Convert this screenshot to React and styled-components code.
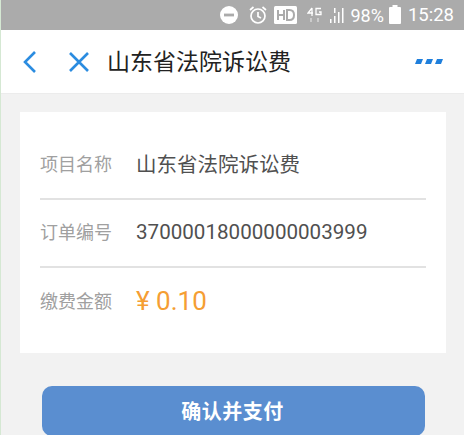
import styled, { createGlobalStyle } from "styled-components";

const CJK = `"Noto Sans CJK SC", "Roboto", sans-serif`;

const GlobalStyle = createGlobalStyle`
  html, body {
    margin: 0;
    padding: 0;
    background: #f2f2f2;
  }
`;

const Page = styled.div`
  width: 464px;
  height: 435px;
  overflow: hidden;
  box-sizing: border-box;
  border-left: 1px solid #d5e8d3;
  background: #f2f2f2;
  font-family: ${CJK};
`;

const StatusBar = styled.div`
  height: 30px;
  margin-left: -1px;
  padding-right: 10px;
  display: flex;
  align-items: center;
  justify-content: flex-end;
  background: #ababab;
  color: #fff;
`;

const StatusIcon = styled.svg`
  display: block;
  margin-right: ${(p) => p.$gap}px;
`;

const Battery = styled.span`
  font-family: Roboto, sans-serif;
  font-size: 18px;
  margin-right: 5px;
`;

const Clock = styled.span`
  font-family: Roboto, sans-serif;
  font-size: 18.5px;
  margin-left: 7px;
`;

const NavBar = styled.div`
  height: 63px;
  padding: 0 21px;
  display: flex;
  align-items: center;
  background: #fff;
  border-bottom: 1px solid #ececec;
`;

const NavIcon = styled.svg`
  display: block;
  margin-right: ${(p) => p.$gap}px;
`;

const Title = styled.div`
  flex: 1;
  font-size: 23px;
  color: #222;
  margin-top: -3px;
`;

const Card = styled.div`
  margin: 18px 18px 0 19px;
  padding: 20px 20px 17px;
  background: #fff;
`;

const Row = styled.div`
  height: 68px;
  display: flex;
  align-items: center;
  border-bottom: ${(p) => (p.$last ? "none" : "2px solid #e2e2e2")};
  box-sizing: border-box;
`;

const Label = styled.div`
  width: 96px;
  font-size: 18px;
  color: #a0a0a0;
  margin-top: -4px;
`;

const Value = styled.div`
  font-size: ${(p) => (p.$amount ? 26 : p.$digits ? 20.6 : 20.5)}px;
  color: ${(p) => (p.$amount ? "#f59e33" : "#505050")};
  font-family: ${(p) => (p.$cjk ? CJK : `Roboto, sans-serif`)};
  margin-top: ${(p) => (p.$cjk ? -4 : -2)}px;
`;

const PayButton = styled.button`
  display: block;
  width: 383px;
  height: 50px;
  margin: 33px 0 0 41px;
  padding: 0 2px 2px 0;
  border: none;
  border-radius: 10px;
  background: #5a8ed0;
  color: #fff;
  font-family: ${CJK};
  font-size: 20px;
  font-weight: 700;
  letter-spacing: 0.5px;
`;

export default function App() {
  return (
    <Page>
      <GlobalStyle />
      <StatusBar>
        <StatusIcon $gap={9} width="20" height="20" viewBox="0 0 20 20">
          <circle cx="10" cy="10" r="9" fill="#fff" />
          <rect x="5" y="8.6" width="10" height="2.8" fill="#ababab" />
        </StatusIcon>
        <StatusIcon $gap={6} width="20" height="20" viewBox="0 0 20 20" fill="none" stroke="#fff">
          <circle cx="10" cy="11" r="7" strokeWidth="1.7" />
          <path d="M10 7v4.4l3 1.6M2 5l3.5-3M18 5l-3.5-3" strokeWidth="1.7" />
        </StatusIcon>
        <StatusIcon $gap={10} width="23" height="20" viewBox="0 0 23 20">
          <rect x="0" y="1" width="23" height="18" rx="1.5" fill="#fff" />
          <path d="M4 5v10M10 5v10M4 10h6" stroke="#ababab" strokeWidth="2" fill="none" />
          <path d="M13 5v10h2.5c3.5 0 4.5-2 4.5-5s-1-5-4.5-5z" stroke="#ababab" strokeWidth="2" fill="none" />
        </StatusIcon>
        <StatusIcon $gap={8} width="15" height="20" viewBox="0 0 15 20" fill="none" stroke="#fff" strokeWidth="1.3">
          <path d="M5 3L1 8h5M5 3v8M14 3.5H9v6h5V7h-2" />
          <path d="M4 13v4M11 13v4" opacity="0.6" />
        </StatusIcon>
        <StatusIcon $gap={6} width="15" height="20" viewBox="0 0 15 20" fill="#fff">
          <rect x="0" y="14" width="1.5" height="4" />
          <rect x="4" y="11" width="1.5" height="7" />
          <rect x="8" y="7" width="1.5" height="11" />
          <rect x="12" y="3" width="1.5" height="15" />
          <rect x="4" y="3" width="1.5" height="5" />
        </StatusIcon>
        <Battery>98%</Battery>
        <StatusIcon $gap={0} width="12" height="20" viewBox="0 0 12 20" fill="#fff">
          <rect x="0" y="2" width="12" height="17" rx="1" />
          <rect x="3.5" y="0" width="5" height="2" />
        </StatusIcon>
        <Clock>15:28</Clock>
      </StatusBar>
      <NavBar>
        <NavIcon $gap={31} width="15" height="24" viewBox="0 0 15 24" fill="none" stroke="#2b8ce0" strokeWidth="2.6">
          <path d="M13 2L3 12l10 10" />
        </NavIcon>
        <NavIcon $gap={17} width="22" height="22" viewBox="0 0 22 22" fill="none" stroke="#2b8ce0" strokeWidth="2.6">
          <path d="M2 2l18 18M20 2L2 20" />
        </NavIcon>
        <Title>山东省法院诉讼费</Title>
        <NavIcon $gap={0} width="28" height="6" viewBox="0 0 28 6" fill="#1f7fdc">
          <path d="M2 0h6l-2 5H0zM12 0h6l-2 5h-6zM22 0h6l-2 5h-6z" />
        </NavIcon>
      </NavBar>
      <Card>
        <Row>
          <Label>项目名称</Label>
          <Value $cjk>山东省法院诉讼费</Value>
        </Row>
        <Row>
          <Label>订单编号</Label>
          <Value $digits>37000018000000003999</Value>
        </Row>
        <Row $last>
          <Label>缴费金额</Label>
          <Value $amount>¥ 0.10</Value>
        </Row>
      </Card>
      <PayButton>确认并支付</PayButton>
    </Page>
  );
}
